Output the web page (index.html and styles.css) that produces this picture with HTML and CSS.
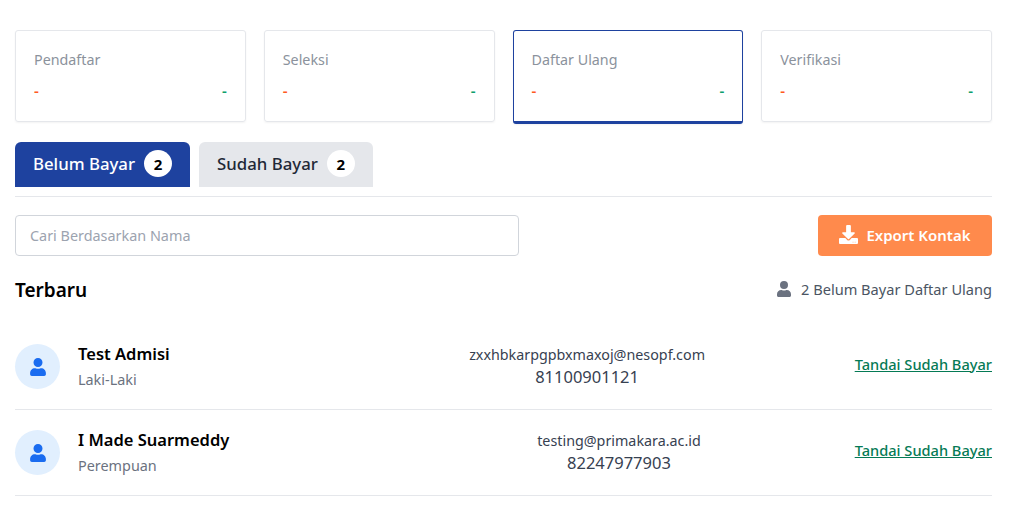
FILE: index.html
```html
<!DOCTYPE html>
<html lang="en">
<head>
    <meta charset="UTF-8">
    <meta name="viewport" content="width=device-width, initial-scale=1.0">
    <title>Daftar Ulang</title>
    <link rel="stylesheet" href="styles.css">
</head>
<body>
    <main class="page">
        <section class="stats">
            <div class="stat-card">
                <p class="stat-title">Pendaftar</p>
                <div class="stat-values"><span class="val-orange">-</span><span class="val-green">-</span></div>
            </div>
            <div class="stat-card">
                <p class="stat-title">Seleksi</p>
                <div class="stat-values"><span class="val-orange">-</span><span class="val-green">-</span></div>
            </div>
            <div class="stat-card active">
                <p class="stat-title">Daftar Ulang</p>
                <div class="stat-values"><span class="val-orange">-</span><span class="val-green">-</span></div>
            </div>
            <div class="stat-card">
                <p class="stat-title">Verifikasi</p>
                <div class="stat-values"><span class="val-orange">-</span><span class="val-green">-</span></div>
            </div>
        </section>

        <nav class="tabs">
            <a class="tab active" href="#">Belum Bayar <span class="tab-count">2</span></a>
            <a class="tab" href="#">Sudah Bayar <span class="tab-count">2</span></a>
        </nav>

        <section class="toolbar">
            <input class="search" type="text" placeholder="Cari Berdasarkan Nama">
            <button class="export" type="button">
                <svg class="export-icon" viewBox="0 0 512 512" width="19" height="19"><path fill="currentColor" d="M216 0h80c13 0 24 11 24 24v168h88c18 0 27 21 14 34L270 378c-8 8-20 8-28 0L90 226c-13-13-4-34 14-34h88V24c0-13 11-24 24-24zM512 376v112c0 13-11 24-24 24H24c-13 0-24-11-24-24V376c0-13 11-24 24-24h147l49 49c20 20 52 20 72 0l49-49h147c13 0 24 11 24 24zM388 464c0-6-5-10-10-10s-10 4-10 10 5 10 10 10 10-4 10-10zm56 0c0-6-5-10-10-10s-10 4-10 10 5 10 10 10 10-4 10-10z"/></svg>
                Export Kontak
            </button>
        </section>

        <section class="list-head">
            <h2 class="list-title">Terbaru</h2>
            <span class="list-info">
                <svg viewBox="0 0 448 512" width="14" height="16"><path fill="#6b7280" d="M224 256a128 128 0 1 0 0-256 128 128 0 0 0 0 256zm90 32h-17a174 174 0 0 1-146 0h-17C60 288 0 348 0 422v42c0 26 22 48 48 48h352c26 0 48-22 48-48v-42c0-74-60-134-134-134z"/></svg>
                2 Belum Bayar Daftar Ulang
            </span>
        </section>

        <section class="list">
            <div class="row">
                <div class="person">
                    <div class="avatar"><svg viewBox="0 0 448 512" width="16" height="18"><path fill="#1a6cf0" d="M224 256a128 128 0 1 0 0-256 128 128 0 0 0 0 256zm90 32h-17a174 174 0 0 1-146 0h-17C60 288 0 348 0 422v42c0 26 22 48 48 48h352c26 0 48-22 48-48v-42c0-74-60-134-134-134z"/></svg></div>
                    <div class="person-text">
                        <div class="name">Test Admisi</div>
                        <div class="gender">Laki-Laki</div>
                    </div>
                </div>
                <div class="contact">
                    <div>zxxhbkarpgpbxmaxoj@nesopf.com</div>
                    <div class="phone">81100901121</div>
                </div>
                <a class="mark" href="#">Tandai Sudah Bayar</a>
            </div>
            <div class="row">
                <div class="person">
                    <div class="avatar"><svg viewBox="0 0 448 512" width="16" height="18"><path fill="#1a6cf0" d="M224 256a128 128 0 1 0 0-256 128 128 0 0 0 0 256zm90 32h-17a174 174 0 0 1-146 0h-17C60 288 0 348 0 422v42c0 26 22 48 48 48h352c26 0 48-22 48-48v-42c0-74-60-134-134-134z"/></svg></div>
                    <div class="person-text">
                        <div class="name">I Made Suarmeddy</div>
                        <div class="gender">Perempuan</div>
                    </div>
                </div>
                <div class="contact">
                    <div>testing@primakara.ac.id</div>
                    <div class="phone">82247977903</div>
                </div>
                <a class="mark" href="#">Tandai Sudah Bayar</a>
            </div>
        </section>
    </main>
</body>
</html>
```

FILE: styles.css
```css
* {
    box-sizing: border-box;
}

body {
    font-family: "Noto Sans", Arial, sans-serif;
    margin: 0;
    padding: 0;
    background-color: #fff;
}

.page {
    padding: 30px 18px 0 15px;
}

.stats {
    display: grid;
    grid-template-columns: repeat(4, 1fr);
    gap: 18px;
}

.stat-card {
    height: 92px;
    padding: 19px 18px;
    border: 1px solid #e5e7eb;
    border-radius: 3px;
    box-shadow: 0 1px 2px rgba(0, 0, 0, 0.05);
}

.stat-card.active {
    height: 94px;
    margin-bottom: -2px;
    border-color: #1e429f;
    border-bottom-width: 3px;
}

.stat-title {
    margin: 0;
    font-size: 14.3px;
    line-height: 20px;
    color: #8b929c;
}

.stat-values {
    display: flex;
    justify-content: space-between;
    margin-top: 10px;
    font-size: 15px;
    line-height: 20px;
    font-weight: 600;
}

.val-orange {
    color: #ff5a1f;
}

.val-green {
    color: #0e9f6e;
}

.tabs {
    display: flex;
    gap: 9px;
    margin-top: 20px;
    padding-bottom: 9px;
    border-bottom: 1px solid #e5e7eb;
}

.tab {
    display: flex;
    align-items: center;
    gap: 9px;
    height: 45px;
    padding: 0 18px 2px;
    border-radius: 6px 6px 0 0;
    background-color: #e5e7eb;
    color: #1f2937;
    font-size: 16.8px;
    font-weight: 500;
    text-decoration: none;
}

.tab.active {
    background-color: #1e429f;
    color: #fff;
}

.tab-count {
    display: flex;
    align-items: center;
    justify-content: center;
    width: 28px;
    height: 27px;
    border-radius: 50%;
    background-color: #fff;
    color: #000;
    font-size: 15px;
    font-weight: 700;
}

.toolbar {
    display: flex;
    justify-content: space-between;
    margin-top: 18px;
}

.search {
    width: 504px;
    height: 41px;
    padding: 0 14px;
    border: 1px solid #d1d5db;
    border-radius: 4px;
    font-family: inherit;
    font-size: 14.4px;
}

.search::placeholder {
    color: #9ca3af;
}

.export {
    display: flex;
    align-items: center;
    justify-content: center;
    gap: 8px;
    width: 174px;
    height: 41px;
    padding: 0 0 2px;
    border: none;
    border-radius: 4px;
    background-color: #ff8a4c;
    color: #fff;
    font-family: inherit;
    font-size: 15px;
    font-weight: 600;
}

.list-head {
    display: flex;
    justify-content: space-between;
    align-items: center;
    margin-top: 20px;
    height: 27px;
}

.list-title {
    margin: 0;
    font-size: 19px;
    font-weight: 600;
    color: #000;
}

.list-info {
    display: flex;
    align-items: center;
    gap: 10px;
    padding-bottom: 2px;
    font-size: 14.6px;
    color: #4b5563;
}

.list {
    margin-top: 21px;
}

.row {
    display: grid;
    grid-template-columns: auto 2fr auto 1fr auto;
    align-items: center;
    height: 86px;
    border-bottom: 1px solid #e5e7eb;
}

.person {
    grid-column: 1;
    display: flex;
    align-items: center;
    gap: 18px;
}

.avatar {
    display: flex;
    align-items: center;
    justify-content: center;
    width: 45px;
    height: 45px;
    border-radius: 50%;
    background-color: #e1effe;
}

.name {
    font-size: 16.5px;
    line-height: 25px;
    font-weight: 600;
    color: #000;
}

.gender {
    font-size: 14.4px;
    line-height: 27px;
    color: #6b7280;
}

.contact {
    grid-column: 3;
    padding-bottom: 2px;
    text-align: center;
    font-size: 14.3px;
    line-height: 22px;
    color: #374151;
}

.phone {
    font-size: 16.5px;
    line-height: 21px;
}

.mark {
    grid-column: 5;
    justify-self: end;
    padding-bottom: 6px;
    font-size: 14.6px;
    font-weight: 500;
    color: #057a55;
}
```
